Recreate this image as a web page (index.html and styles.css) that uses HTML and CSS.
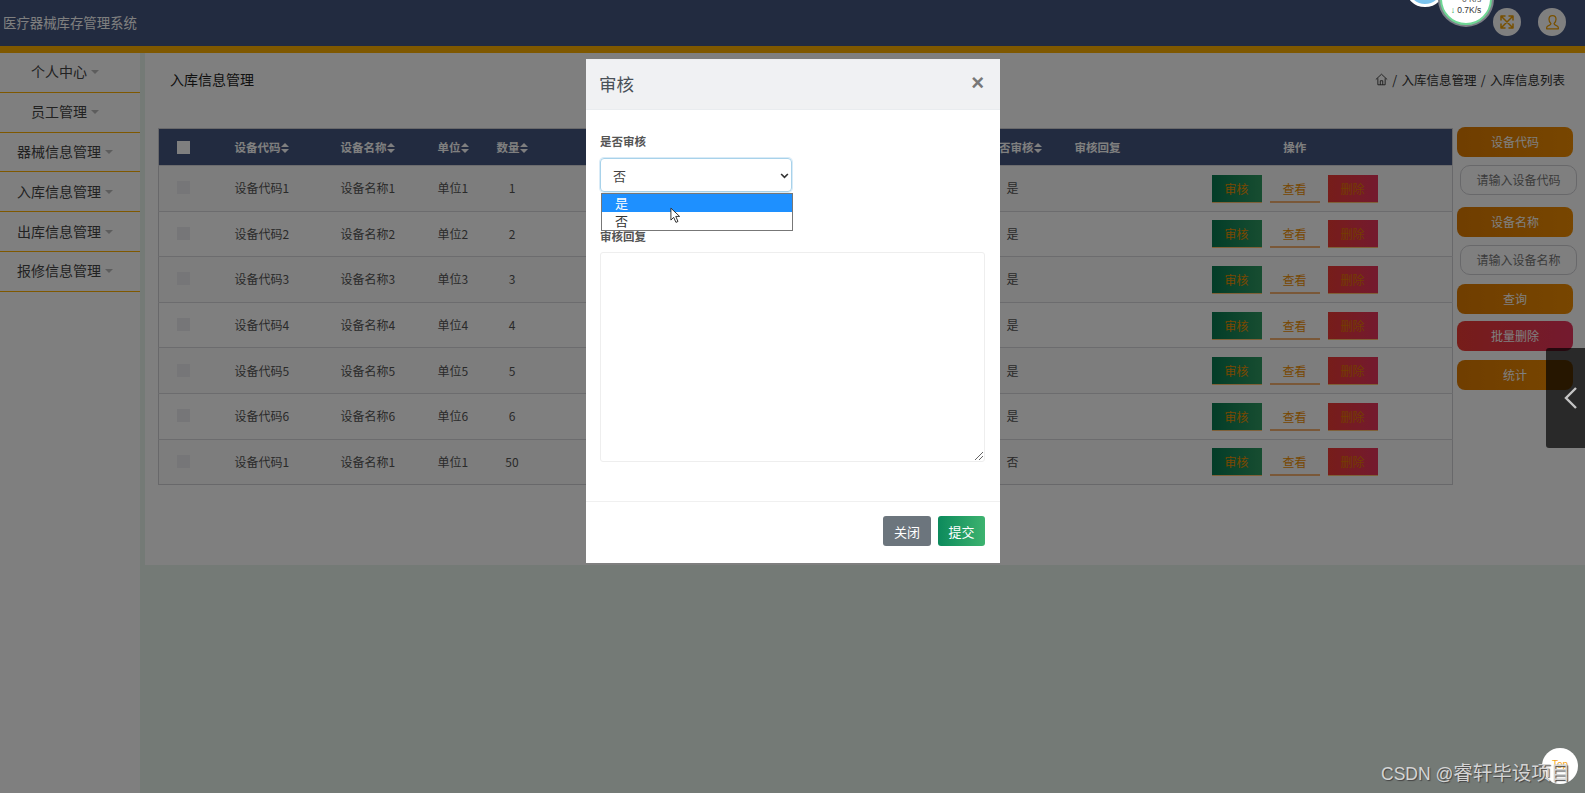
FILE: index.html
```html
<!DOCTYPE html>
<html lang="zh">
<head>
<meta charset="utf-8">
<title>医疗器械库存管理系统</title>
<link rel="stylesheet" href="styles.css">
</head>
<body>
<header class="topbar">
  <div class="brand">医疗器械库存管理系统</div>
  <div class="top-icons">
    <span class="round-btn"><svg viewBox="0 0 16 16" width="16" height="16" fill="none" stroke="#f0a000" stroke-width="1.500" stroke-linecap="round" stroke-linejoin="round"><path d="M2.500 2.500l11 11M13.500 2.500l-11 11M2 6V2h4M10 2h4v4M14 10v4h-4M6 14H2v-4"/></svg></span>
    <span class="round-btn"><svg viewBox="0 0 16 16" width="17" height="17" fill="none" stroke="#f0a000" stroke-width="1.200" stroke-linejoin="round"><path d="M8 1.500c2 0 3.300 1.500 3.300 3.500 0 1.700-.8 3.200-1.800 4 .1.900.7 1.300 1.700 1.700 1.500.6 2.300 1 2.300 2.200v1H2.500v-1c0-1.200.8-1.600 2.300-2.200 1-.4 1.600-.8 1.700-1.700-1-.8-1.800-2.300-1.800-4 0-2 1.300-3.500 3.300-3.500z"/></svg></span>
  </div>
</header>
<div class="layout">
  <nav class="sidebar">
    <div class="nav-item"><span class="caret-text">个人中心</span></div>
    <div class="nav-item"><span class="caret-text">员工管理</span></div>
    <div class="nav-item"><span class="caret-text">器械信息管理</span></div>
    <div class="nav-item"><span class="caret-text">入库信息管理</span></div>
    <div class="nav-item"><span class="caret-text">出库信息管理</span></div>
    <div class="nav-item"><span class="caret-text">报修信息管理</span></div>
  </nav>
  <main class="main">
    <section class="content">
      <div class="crumbs">
        <h2 class="page-title">入库信息管理</h2>
        <div class="path">
          <svg viewBox="0 0 16 16" width="13" height="13" fill="none" stroke="#222" stroke-width="1"><path d="M1 8L8 1.500 15 8M3.500 6.500V14.500h9V6.500M6.500 14.500V9.500h3v5"/></svg>
          <span>/ 入库信息管理 / 入库信息列表</span>
        </div>
      </div>
      <div class="workarea">
        <table class="grid">
          <thead>
            <tr>
              <th class="c-check"><span class="box head-box"></span></th>
              <th class="c-code">设备代码<i class="sort"></i></th>
              <th class="c-name">设备名称<i class="sort"></i></th>
              <th class="c-unit">单位<i class="sort"></i></th>
              <th class="c-qty">数量<i class="sort"></i></th>
              <th class="c-hidden"></th>
              <th class="c-audit">是否审核<i class="sort"></i></th>
              <th class="c-reply">审核回复</th>
              <th class="c-ops">操作</th>
            </tr>
          </thead>
          <tbody>
            <tr><td><span class="box"></span></td><td>设备代码1</td><td>设备名称1</td><td>单位1</td><td class="num">1</td><td></td><td>是</td><td></td><td class="ops"><a class="op op-green">审核</a><a class="op op-line">查看</a><a class="op op-red">删除</a></td></tr>
            <tr><td><span class="box"></span></td><td>设备代码2</td><td>设备名称2</td><td>单位2</td><td class="num">2</td><td></td><td>是</td><td></td><td class="ops"><a class="op op-green">审核</a><a class="op op-line">查看</a><a class="op op-red">删除</a></td></tr>
            <tr><td><span class="box"></span></td><td>设备代码3</td><td>设备名称3</td><td>单位3</td><td class="num">3</td><td></td><td>是</td><td></td><td class="ops"><a class="op op-green">审核</a><a class="op op-line">查看</a><a class="op op-red">删除</a></td></tr>
            <tr><td><span class="box"></span></td><td>设备代码4</td><td>设备名称4</td><td>单位4</td><td class="num">4</td><td></td><td>是</td><td></td><td class="ops"><a class="op op-green">审核</a><a class="op op-line">查看</a><a class="op op-red">删除</a></td></tr>
            <tr><td><span class="box"></span></td><td>设备代码5</td><td>设备名称5</td><td>单位5</td><td class="num">5</td><td></td><td>是</td><td></td><td class="ops"><a class="op op-green">审核</a><a class="op op-line">查看</a><a class="op op-red">删除</a></td></tr>
            <tr><td><span class="box"></span></td><td>设备代码6</td><td>设备名称6</td><td>单位6</td><td class="num">6</td><td></td><td>是</td><td></td><td class="ops"><a class="op op-green">审核</a><a class="op op-line">查看</a><a class="op op-red">删除</a></td></tr>
            <tr><td><span class="box"></span></td><td>设备代码1</td><td>设备名称1</td><td>单位1</td><td class="num">50</td><td></td><td>否</td><td></td><td class="ops"><a class="op op-green">审核</a><a class="op op-line">查看</a><a class="op op-red">删除</a></td></tr>
          </tbody>
        </table>
        <aside class="filters">
          <div class="pill pill-gold">设备代码</div>
          <div class="pill pill-input">请输入设备代码</div>
          <div class="pill pill-gold">设备名称</div>
          <div class="pill pill-input">请输入设备名称</div>
          <div class="pill pill-gold pill-query">查询</div>
          <div class="pill pill-red">批量删除</div>
          <div class="pill pill-gold">统计</div>
        </aside>
      </div>
    </section>
  </main>
</div>

<div class="backdrop"></div>

<div class="modal">
  <div class="modal-head">
    <span class="modal-title">审核</span>
    <span class="modal-x">×</span>
  </div>
  <div class="modal-body">
    <div class="field-label">是否审核</div>
    <div class="select">
      <span>否</span>
      <svg viewBox="0 0 12 12" width="9" height="9" fill="none" stroke="#333" stroke-width="2.200"><path d="M1.500 4L6 8.500 10.500 4"/></svg>
    </div>
    <div class="options">
      <div class="option option-on">是</div>
      <div class="option">否</div>
      <svg class="cursor" viewBox="0 0 12 18" width="11" height="17" fill="#fff" stroke="#222" stroke-width="1"><path d="M1 1v13l3-3 2.500 5.500 2.200-1L6.300 10H10.500z"/></svg>
    </div>
    <div class="field-label label-reply">审核回复</div>
    <div class="textarea">
      <svg class="grip" viewBox="0 0 8 8" width="8" height="8" stroke="#666" fill="none"><path d="M0 8L8 0M4 8l4-4"/></svg>
    </div>
  </div>
  <div class="modal-foot">
    <button class="btn btn-gray">关闭</button>
    <button class="btn btn-green">提交</button>
  </div>
</div>

<div class="blueball"></div>
<div class="netball">
  <span class="speed-up">━ 0 K/s</span>
  <span class="speed-down"><i class="down-arrow">↓</i> 0.7K/s</span>
</div>

<div class="sidepanel">
  <svg viewBox="0 0 14 24" width="14" height="24" fill="none" stroke="#c4c4c4" stroke-width="2.400"><path d="M12 2L2 12l10 10"/></svg>
</div>
<div class="top-btn">Top</div>
<div class="watermark">CSDN @<span class="wm-cjk">睿轩毕设项目</span></div>
</body>
</html>
```

FILE: styles.css
```css
* { box-sizing: border-box; }
html, body { margin: 0; height: 100%; }
body {
  width: 1585px;
  height: 793px;
  overflow: hidden;
  position: relative;
  background: #e8f4ec;
  font-family: "Noto Sans CJK SC", "Liberation Sans", sans-serif;
  font-size: 12px;
  color: #333;
}
.topbar {
  height: 53px;
  background: #445680;
  border-bottom: 7px solid #ffb000;
  display: flex;
  justify-content: space-between;
  align-items: flex-start;
}
.brand {
  padding: 12px 0 0 3px;
  color: #fff;
  font-size: 13.400px;
  line-height: 20px;
}
.top-icons {
  display: flex;
  gap: 17px;
  padding: 8px 19px 0 0;
}
.round-btn {
  width: 28px;
  height: 28px;
  border-radius: 50%;
  background: #fff;
  display: flex;
  align-items: center;
  justify-content: center;
}
.layout { display: flex; }
.sidebar {
  width: 140px;
  height: 740px;
  background: #fefeff;
}
.nav-item {
  height: 39.800px;
  border-bottom: 1px solid #ffb000;
  display: flex;
  align-items: center;
  justify-content: center;
  padding: 0 10px 2px 0;
  color: #444;
  font-size: 14px;
}
.caret-text::after {
  content: "";
  display: inline-block;
  margin-left: 4px;
  vertical-align: 3px;
  border-left: 4px solid transparent;
  border-right: 4px solid transparent;
  border-top: 4px solid #bbb;
}
.main { margin-left: 5px; flex: 1; }
.content {
  background: #fff;
  height: 512px;
  padding: 0 0 0 13px;
}
.crumbs {
  display: flex;
  justify-content: space-between;
  align-items: center;
  height: 56px;
  padding: 0 20px 4px 12px;
}
.page-title { margin: 0; font-weight: 400; font-size: 14px; color: #222; }
.path { display: flex; align-items: center; gap: 4px; color: #333; font-size: 12.500px; word-spacing: 1.500px; }
.workarea {
  display: flex;
  align-items: flex-start;
  margin-top: 19px;
}
.grid {
  width: 1295px;
  table-layout: fixed;
  border-collapse: collapse;
  border: 1px solid #d0d0d4;
}
.grid th {
  height: 37px;
  background: #445680;
  color: #fff;
  font-weight: 700;
  font-size: 11.500px;
  text-align: left;
  padding: 0;
}
.grid td {
  height: 45.600px;
  border-top: 1px solid #d8d8dc;
  padding: 0 0 1px;
  color: #555;
  font-size: 12px;
}
.grid tbody tr:nth-child(odd) { background: #fafafa; }
.c-check { width: 76px; padding-left: 18px !important; }
.grid td:first-child { padding-left: 18px; }
.c-code { width: 106px; }
.c-name { width: 97px; }
.c-unit { width: 59px; }
.c-qty { width: 70px; }
.c-hidden { width: 440px; }
.c-audit { width: 68px; text-indent: -19px; white-space: nowrap; }
.c-reply { width: 137px; }
.grid .c-ops { text-align: center; padding-right: 74px; }
.grid .num { text-align: center; padding-right: 39px; }
.box {
  display: block;
  width: 13px;
  height: 13px;
  background: #ececf0;
}
.head-box { background: #fff; }
.sort {
  display: inline-block;
  width: 8px;
  height: 10px;
  vertical-align: -1px;
  position: relative;
  text-indent: 0;
}
.sort::before, .sort::after {
  content: "";
  position: absolute;
  left: 0;
  border-left: 4px solid transparent;
  border-right: 4px solid transparent;
}
.sort::before { top: 0; border-bottom: 4px solid #fff; }
.sort::after { bottom: 0; border-top: 4px solid #fff; }
.grid .ops { white-space: nowrap; font-size: 0; padding-top: 2px; }
.op {
  display: inline-block;
  width: 50px;
  height: 28px;
  margin-right: 8px;
  text-align: center;
  font-size: 12px;
  line-height: 27px;
  color: #f09000;
  border-bottom: 1px solid #ffc070;
}
.op-green { background: linear-gradient(90deg, #067a50, #2f9a62); }
.op-line { border-bottom: 2px solid #f5b070; }
.op-red { background: linear-gradient(90deg, #ee3a34, #e8345e); margin-right: 0; color: #e87a00; }
.filters {
  display: flex;
  flex-direction: column;
  margin: -1px 0 0 4px;
  width: 120px;
}
.pill {
  width: 116px;
  height: 30px;
  line-height: 30px;
  text-align: center;
  border-radius: 8px;
  color: #fff;
  font-size: 12px;
}
.pill-gold { background: linear-gradient(90deg, #e07c00, #f08c00); margin-bottom: 8px; }
.pill-input {
  width: 117px;
  margin-left: 3px;
  background: #fff;
  color: #777;
  border: 1px solid #d0d0d4;
  border-radius: 10px;
  line-height: 28px;
  margin-bottom: 12px;
}
.pill-query { margin-top: -3px; margin-bottom: 7px; }
.pill-red {
  background: linear-gradient(90deg, #ee3a34, #e8345e);
  margin-bottom: 9px;
}
.backdrop {
  position: absolute;
  inset: 0;
  background: rgba(0, 0, 0, .5);
}
.modal {
  position: absolute;
  left: 586px;
  top: 59px;
  width: 414px;
  height: 504px;
  background: #fff;
  display: flex;
  flex-direction: column;
}
.modal-head {
  height: 51px;
  background: #f0f1f3;
  border-bottom: 1px solid #e9ecef;
  display: flex;
  justify-content: space-between;
  align-items: center;
  padding: 0 16px 2px 13px;
}
.modal-title { font-size: 17.500px; color: #495057; }
.modal-x { font-size: 22px; font-weight: 700; color: #777; font-family: "Liberation Sans", sans-serif; }
.modal-body { flex: 1; padding: 23px 14px 0; position: relative; }
.field-label { font-size: 11.500px; font-weight: 700; color: #555; line-height: 16px; }
.select {
  margin-top: 9px;
  width: 192px;
  height: 34px;
  border: 1px solid #a8d2ea;
  box-shadow: 0 0 0 1px rgba(128,189,230,.3);
  border-radius: 4px;
  display: flex;
  justify-content: space-between;
  align-items: center;
  padding: 0 2px 0 12px;
  font-size: 13px;
  color: #444;
}
.options {
  position: absolute;
  left: 15px;
  top: 83px;
  width: 192px;
  height: 38px;
  background: #fff;
  border: 1px solid #777;
  font-size: 13px;
  color: #333;
}
.option { height: 18px; line-height: 18px; padding-left: 13px; }
.option-on { background: #1e90ff; color: #fff; }
.cursor { position: absolute; left: 68px; top: 13px; }
.label-reply { margin-top: 36px; }
.textarea {
  margin-top: 8px;
  width: 385px;
  height: 210px;
  border: 1px solid #eee;
  border-radius: 3px;
  position: relative;
}
.grip { position: absolute; right: 1px; bottom: 1px; }
.modal-foot {
  height: 62px;
  border-top: 1px solid #f0f0f0;
  display: flex;
  justify-content: flex-end;
  align-items: flex-start;
  gap: 7px;
  padding: 14px 15px 0 0;
}
.btn {
  height: 30px;
  border: 0;
  border-radius: 3px;
  color: #fff;
  font: 13px "Noto Sans CJK SC", sans-serif;
}
.btn-gray { width: 48px; background: #6c757d; }
.btn-green { width: 47px; background: linear-gradient(90deg, #0c8a5c, #3db36f); }
.netball {
  position: absolute;
  left: 1440px;
  top: -27px;
  width: 52px;
  height: 52px;
  border-radius: 50%;
  background: #fff;
  border: 2px solid #6fd795;
  box-shadow: 0 0 0 2px #7d8088;
  display: flex;
  flex-direction: column;
  justify-content: flex-end;
  align-items: center;
  padding-bottom: 7px;
  font-size: 8.500px;
  line-height: 11px;
  color: #333;
  font-family: "Liberation Sans", sans-serif;
  white-space: nowrap;
}
.speed-up { color: #555; }
.down-arrow { color: #16a34a; font-style: normal; font-weight: 700; }
.blueball {
  position: absolute;
  left: 1405px;
  top: -33px;
  width: 40px;
  height: 40px;
  border-radius: 50%;
  background: #7cc4ee;
  border: 3px solid #fff;
}
.sidepanel {
  position: absolute;
  left: 1546px;
  top: 348px;
  width: 39px;
  height: 100px;
  background: rgba(0,0,0,.68);
  border-radius: 3px 0 0 3px;
  display: flex;
  align-items: center;
  padding: 0 0 0 18px;
}
.top-btn {
  position: absolute;
  left: 1542px;
  top: 748px;
  width: 36px;
  height: 36px;
  border-radius: 50%;
  background: #fff;
  color: #f5a623;
  font: 10px/34px "Liberation Sans", sans-serif;
  text-align: center;
}
.watermark {
  position: absolute;
  left: 1381px;
  top: 760px;
  font-size: 17.500px;
  line-height: 26px;
  color: #d4d4d4;
  text-shadow: 1px 1px 1px #444;
  font-family: "Liberation Sans", "Noto Sans CJK SC", sans-serif;
  white-space: nowrap;
}
.wm-cjk { font-size: 19.500px; }
```
